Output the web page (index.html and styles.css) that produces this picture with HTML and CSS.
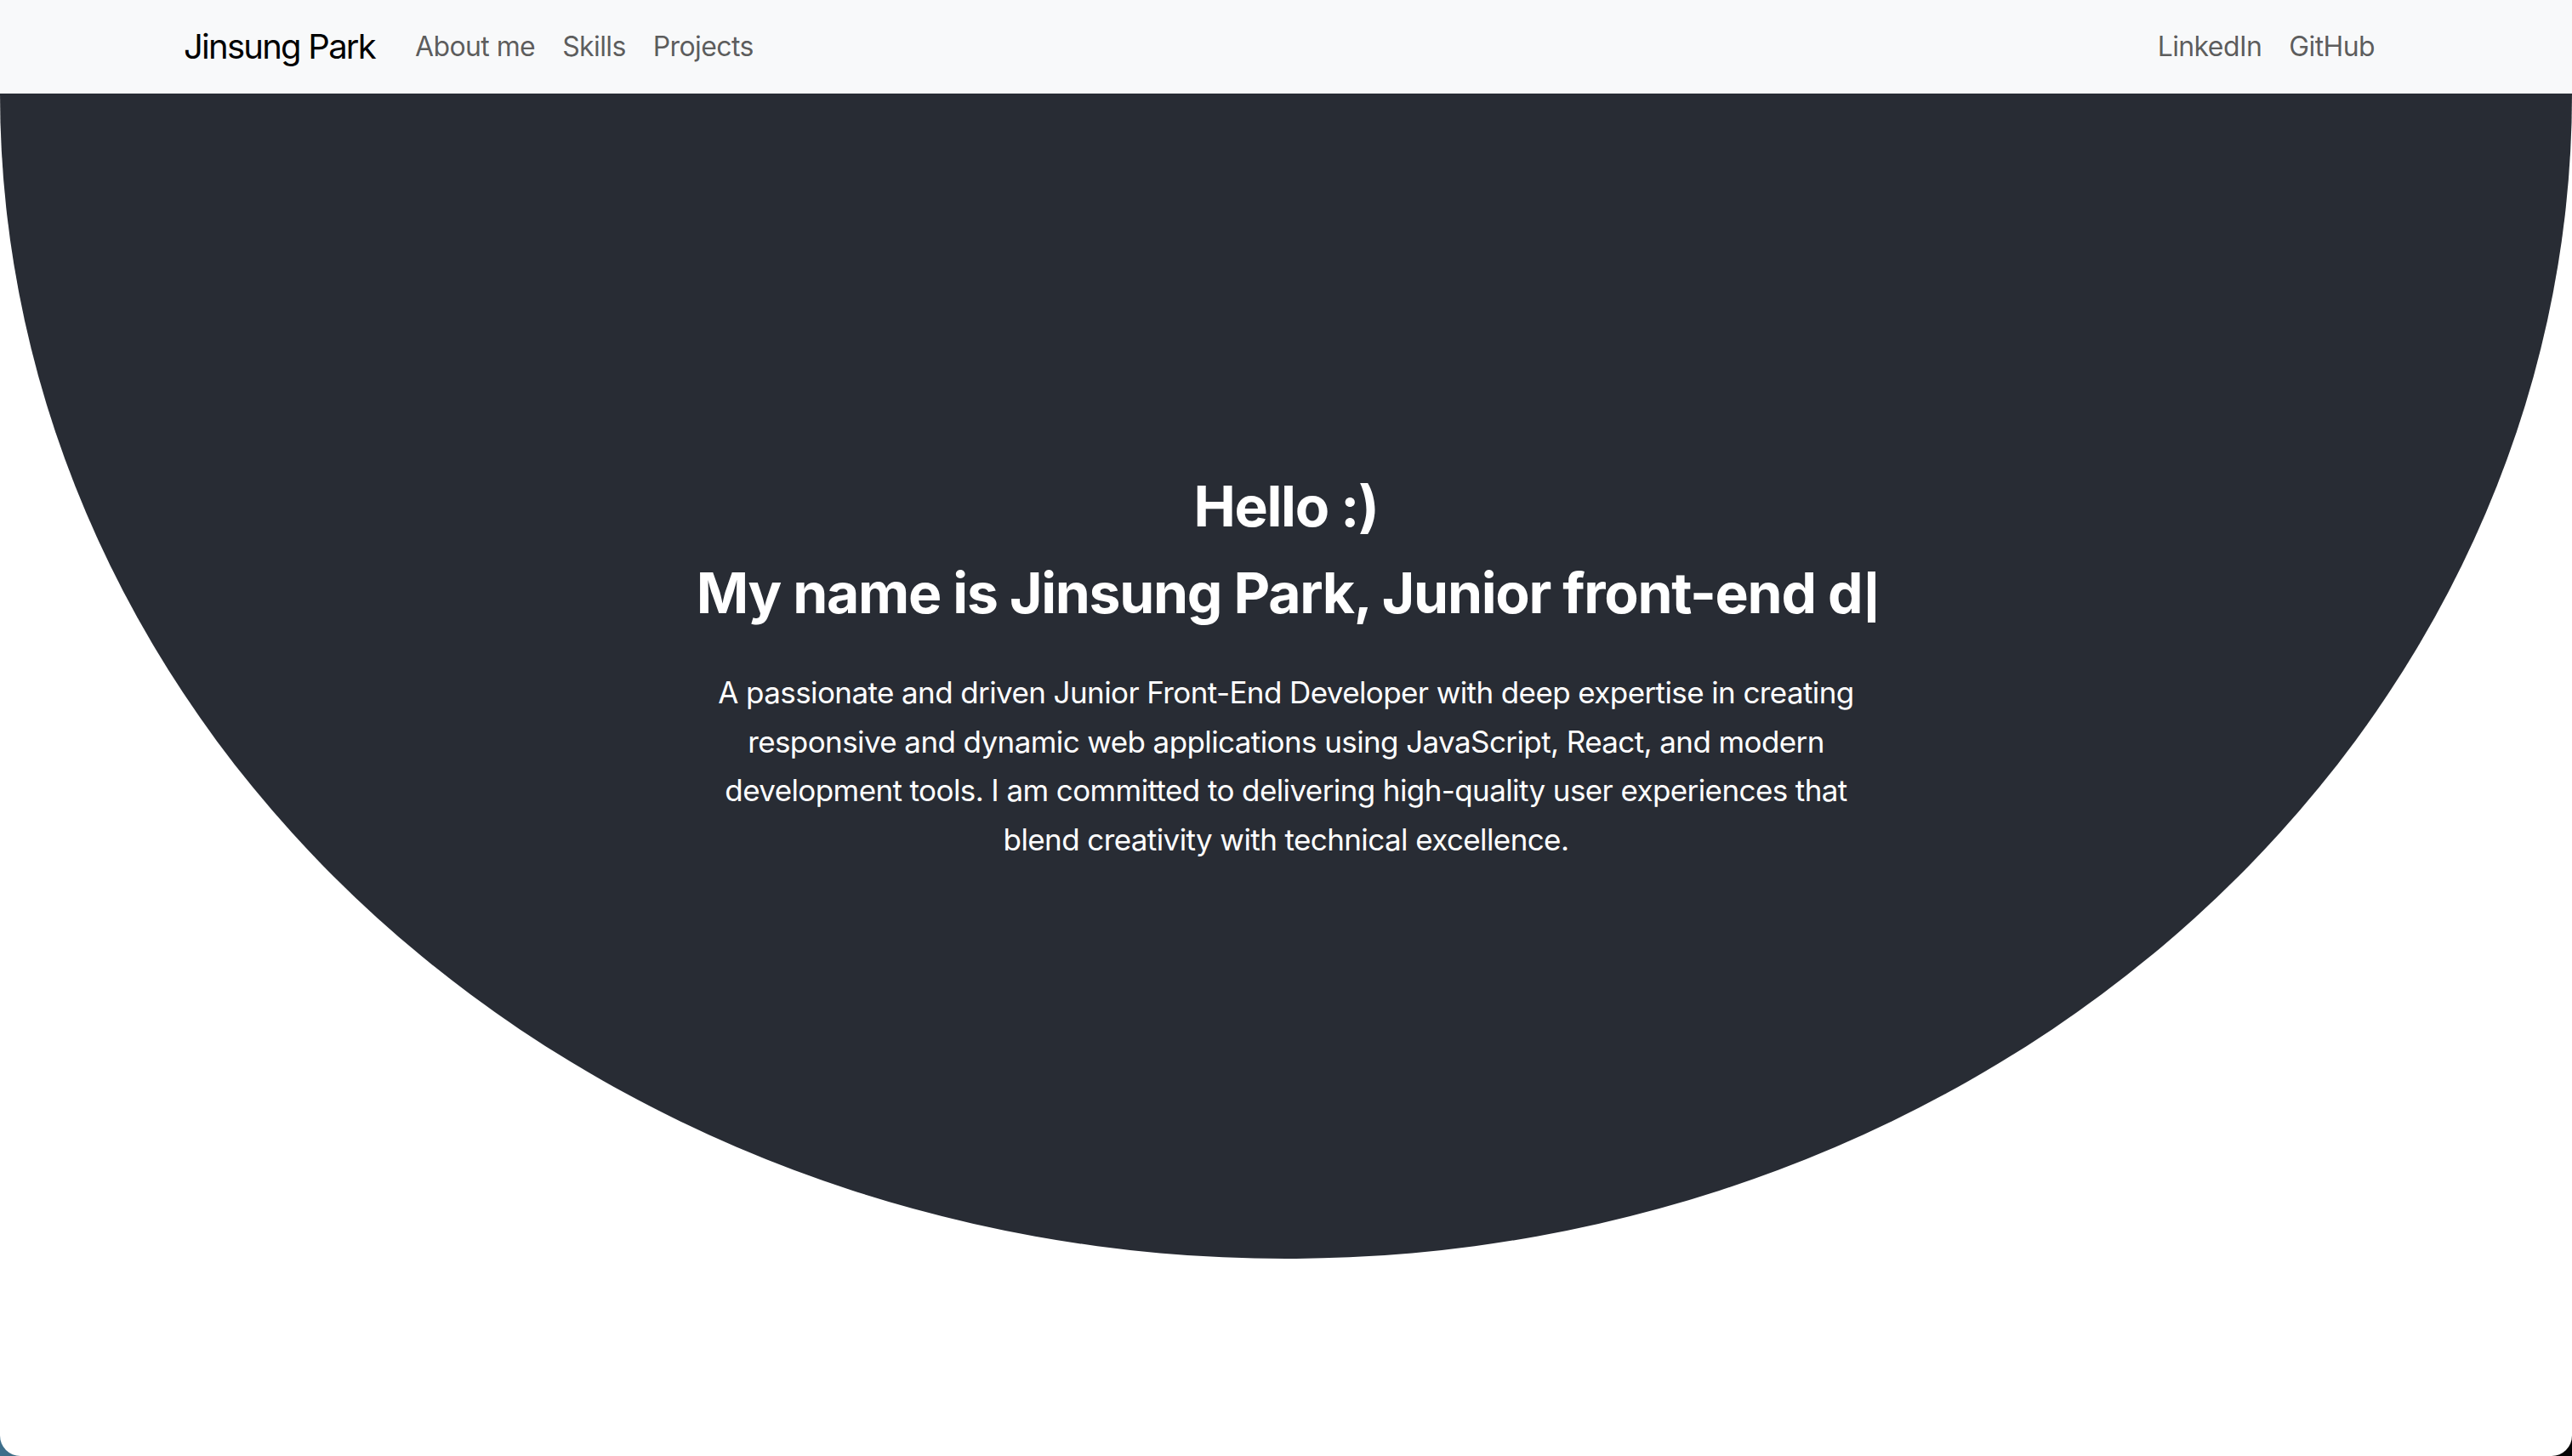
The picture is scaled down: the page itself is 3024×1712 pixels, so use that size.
FILE: index.html
```html
<!DOCTYPE html>
<html lang="en">
<head>
<meta charset="utf-8">
<title>Jinsung Park</title>
<link rel="stylesheet" href="styles.css">
</head>
<body>
<div class="page">
  <nav class="navbar">
    <div class="container">
      <a class="brand" href="#">Jinsung Park</a>
      <ul class="nav">
        <li><a class="nav-link" href="#about">About me</a></li>
        <li><a class="nav-link" href="#skills">Skills</a></li>
        <li><a class="nav-link" href="#projects">Projects</a></li>
      </ul>
      <ul class="nav nav-end">
        <li><a class="nav-link" href="#">LinkedIn</a></li>
        <li><a class="nav-link" href="#">GitHub</a></li>
      </ul>
    </div>
  </nav>
  <main>
    <section class="hero">
      <div class="hero-inner">
        <h1 class="hero-title">Hello :)</h1>
        <h1 class="hero-title typing">My name is Jinsung Park, Junior front-end d<span class="cursor"></span></h1>
        <p class="intro">A passionate and driven Junior Front-End Developer with deep expertise in creating responsive and dynamic web applications using JavaScript, React, and modern development tools. I am committed to delivering high-quality user experiences that blend creativity with technical excellence.</p>
      </div>
    </section>
  </main>
</div>
</body>
</html>
```
FILE: styles.css
```css
html {
  background: linear-gradient(90deg, #3d6f8c 0%, #4a5a3a 6%, #151515 60%, #050505 100%);
}
body {
  margin: 0;
  font-family: Inter, "Noto Sans", "Liberation Sans", sans-serif;
}
.page {
  min-height: 1712px;
  background: #ffffff;
  border-radius: 0 0 24px 24px;
  overflow: hidden;
}
.navbar {
  background: #f8f9fa;
  height: 110px;
  display: flex;
  align-items: center;
  box-sizing: border-box;
}
.container {
  width: 100%;
  max-width: 2640px;
  margin: 0 auto;
  padding: 0 24px;
  box-sizing: border-box;
  display: flex;
  align-items: center;
}
.brand {
  font-size: 40px;
  line-height: 60px;
  color: #000000;
  text-decoration: none;
  margin-right: 31px;
  letter-spacing: -1.75px;
}
.nav {
  list-style: none;
  margin: 0;
  padding: 0;
  display: flex;
}
.nav-end {
  margin-left: auto;
}
.nav-link {
  display: block;
  padding: 0 16px;
  font-size: 32px;
  line-height: 48px;
  color: rgba(0, 0, 0, 0.65);
  text-decoration: none;
  letter-spacing: -0.6px;
}
.hero {
  height: 1370px;
  background: #282c34;
  border-radius: 0 0 50% 50% / 0 0 100% 100%;
  color: #ffffff;
  padding-top: 434px;
  box-sizing: border-box;
}
.hero-inner {
  display: flex;
  flex-direction: column;
  align-items: center;
  text-align: center;
}
.hero-title {
  margin: 0;
  font-size: 66px;
  line-height: 102px;
  font-weight: 700;
  letter-spacing: -1.3px;
}
.cursor {
  display: inline-block;
  width: 9px;
  height: 60px;
  margin-left: 7px;
  background: #ffffff;
  vertical-align: -11px;
}
.intro {
  margin: 38px 0 0;
  max-width: 1400px;
  font-size: 35px;
  line-height: 57.6px;
  letter-spacing: -0.6px;
}
```
